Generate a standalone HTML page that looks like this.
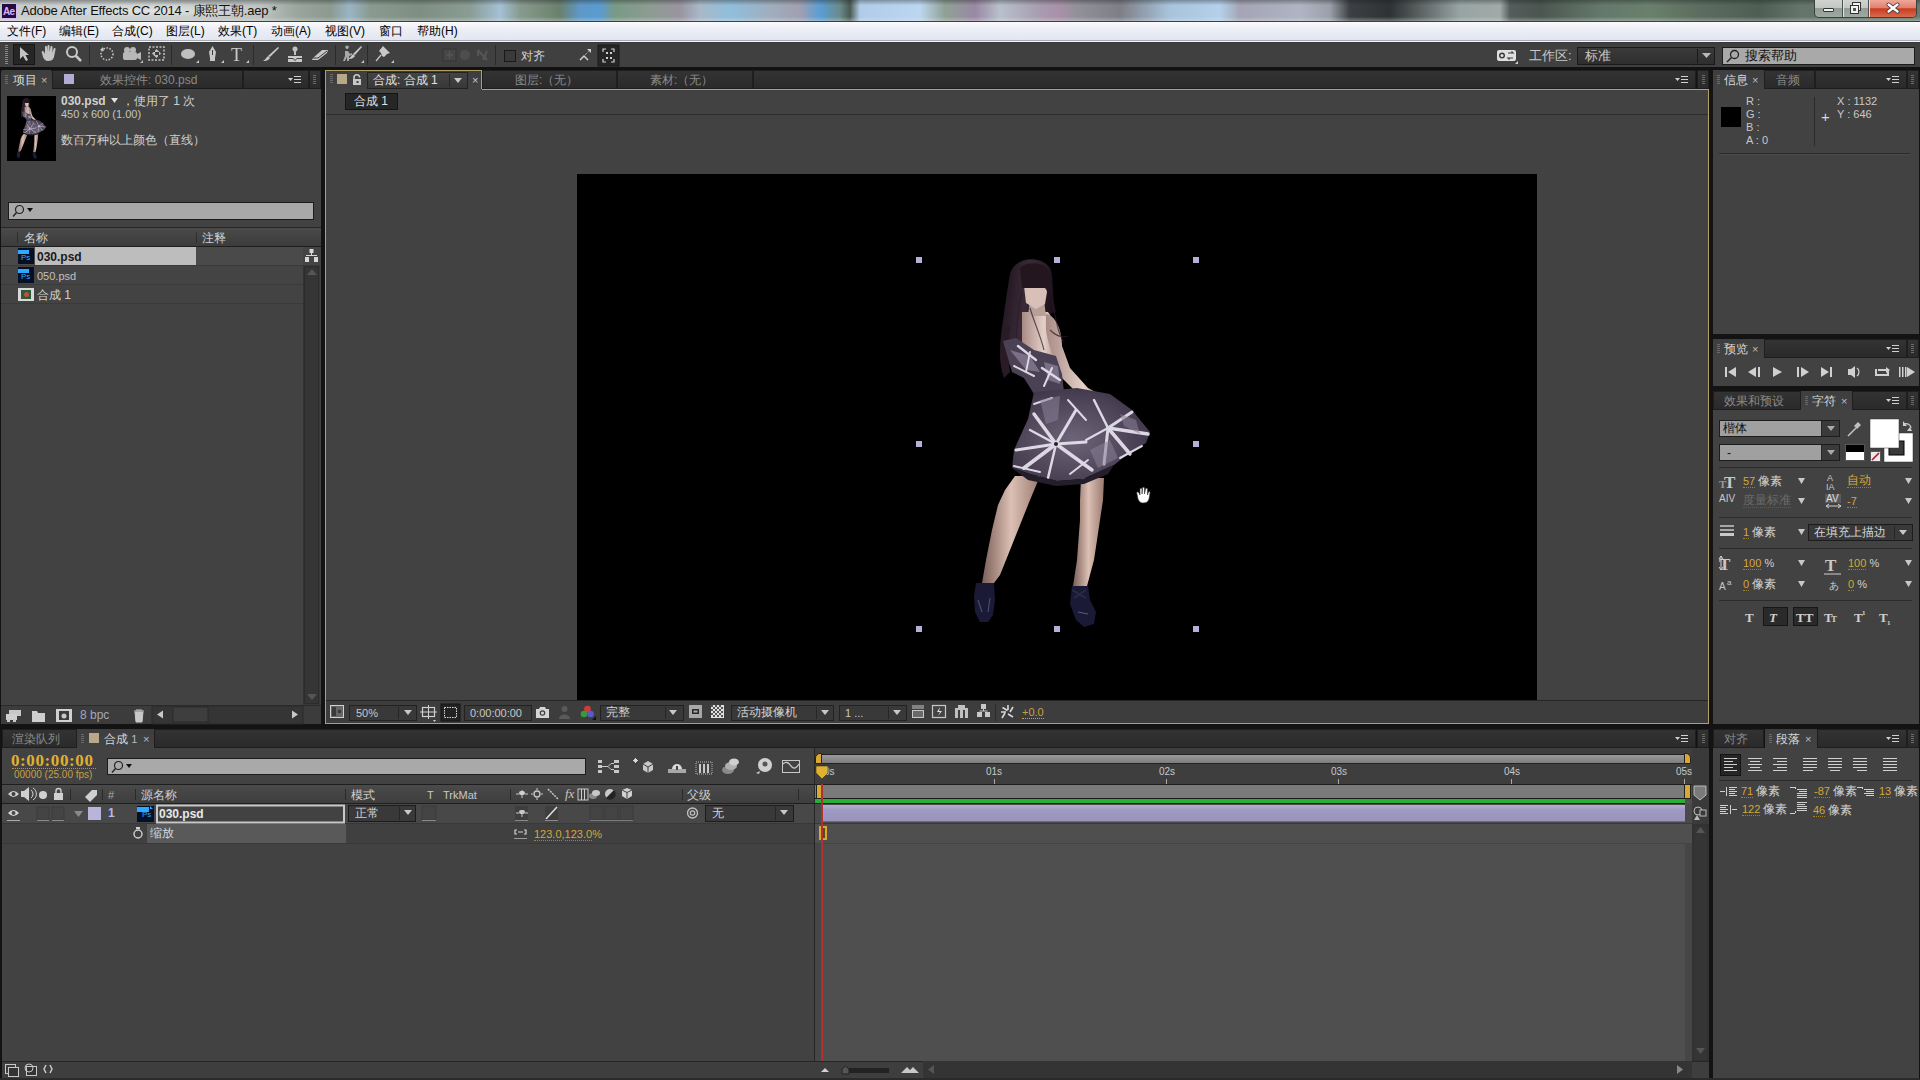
<!DOCTYPE html>
<html><head><meta charset="utf-8">
<style>
*{box-sizing:border-box;margin:0;padding:0}
html,body{width:1920px;height:1080px;overflow:hidden;background:#131313;font-family:"Liberation Sans",sans-serif;font-size:12px;color:#c8c8c8}
.a{position:absolute}
.t{position:absolute;white-space:nowrap;line-height:14px}
svg{position:absolute;overflow:visible}
</style></head><body>
<!-- TITLE BAR -->
<div class="a" style="left:0;top:0;width:1920px;height:21px;background:linear-gradient(90deg,#c8cccb 0px,#c6cac9 120px,#bcc2c0 260px,#98a49c 300px,#8c9a90 330px,#9ab4c4 350px,#8a9a90 370px,#7e8e82 420px,#8a9c94 470px,#a4c0d4 500px,#889a8e 520px,#6a806c 560px,#5e98c8 580px,#5a9cd0 600px,#7a9a84 615px,#8c9c92 650px,#9a94a0 680px,#a8b8c8 700px,#90bedc 730px,#a0aebe 770px,#a0a0b0 800px,#5a9ed4 820px,#6a8a8a 840px,#4a5a52 850px,#b0cce8 860px,#bcd6f0 920px,#90a094 945px,#9a88a4 975px,#b8c0cc 1000px,#a89cb0 1040px,#a890a8 1060px,#909098 1080px,#7e7e86 1120px,#a8c4dc 1170px,#b4d0ea 1220px,#a4a4b4 1240px,#b0b4c4 1300px,#9aa0a8 1330px,#3c4044 1350px,#2e3234 1390px,#5a6262 1420px,#98a4a4 1460px,#a0aaa8 1500px,#545c5c 1510px,#4a5650 1540px,#64786a 1600px,#6a806c 1650px,#5c6c5e 1700px,#4e5e54 1760px,#64746a 1800px,#6a7a70 1920px)"></div>

<div class="a" style="left:0;top:0;width:1920px;height:21px;background:linear-gradient(rgba(20,25,25,.35),rgba(255,255,255,0) 25%,rgba(255,255,255,0) 80%,rgba(230,235,235,.35))"></div>
<!-- AE icon -->
<div class="a" style="left:1px;top:3px;width:16px;height:16px;background:#d6b8f0;border-radius:1px"></div>
<div class="a" style="left:2px;top:4px;width:14px;height:14px;background:#230d3e"></div>
<div class="t" style="left:3px;top:5px;font-size:10px;color:#d9b3ff;font-weight:bold;letter-spacing:-0.8px">Ae</div>
<div class="a" style="left:18px;top:2px;width:270px;height:18px;background:radial-gradient(ellipse at center,rgba(235,240,240,.7) 0,rgba(235,240,240,0) 70%)"></div>
<div class="t" style="left:21px;top:3px;font-size:13px;color:#111;line-height:16px;letter-spacing:-0.2px">Adobe After Effects CC 2014 - 康熙王朝.aep *</div>
<!-- window buttons -->
<div class="a" style="left:1814px;top:0;width:103px;height:18px;border:1px solid #3a4040;border-top:none;border-radius:0 0 5px 5px;background:linear-gradient(#d0d4d0,#c4c8c4 45%,#949c96 50%,#a0a8a2)"></div>
<div class="a" style="left:1869px;top:0;width:47px;height:17px;border-radius:0 0 4px 0;background:linear-gradient(#f0a898,#e08070 45%,#c83c20 52%,#d86a50)"></div>
<div class="a" style="left:1842px;top:0;width:1px;height:17px;background:#4a5050;box-shadow:1px 0 0 #e0e4e0"></div>
<div class="a" style="left:1868px;top:0;width:1px;height:17px;background:#4a5050;box-shadow:1px 0 0 #e8e0e0"></div>
<div class="a" style="left:1823px;top:8px;width:11px;height:4px;background:#f0f0f0;border:1px solid #333;border-radius:1px"></div>
<div class="a" style="left:1852px;top:2px;width:9px;height:9px;background:#f0f0f0;border:1px solid #333"></div>
<div class="a" style="left:1850px;top:5px;width:9px;height:9px;background:#f0f0f0;border:1px solid #333"></div>
<div class="a" style="left:1853px;top:8px;width:3px;height:3px;background:#555"></div>
<svg style="left:1887px;top:3px" width="12" height="10"><path d="M1.5 1.5 L10.5 8.5 M10.5 1.5 L1.5 8.5" stroke="#333" stroke-width="4" stroke-linecap="round"/><path d="M1.5 1.5 L10.5 8.5 M10.5 1.5 L1.5 8.5" stroke="#fff" stroke-width="2.4" stroke-linecap="round"/></svg>
<!-- MENU BAR -->
<div class="a" style="left:0;top:21px;width:1920px;height:1px;background:#3c4040"></div>
<div class="a" style="left:0;top:22px;width:1920px;height:19px;background:linear-gradient(#fbfbfd,#eceef6 40%,#e2e6f0)"></div>
<div class="a" style="left:0;top:40px;width:1920px;height:1px;background:#a8acb4"></div>
<div class="a" style="left:0;top:41px;width:1920px;height:1px;background:#f4f6fa"></div>
<div class="t" style="left:7px;top:24px;color:#000">文件(F)</div>
<div class="t" style="left:59px;top:24px;color:#000">编辑(E)</div>
<div class="t" style="left:112px;top:24px;color:#000">合成(C)</div>
<div class="t" style="left:166px;top:24px;color:#000">图层(L)</div>
<div class="t" style="left:218px;top:24px;color:#000">效果(T)</div>
<div class="t" style="left:271px;top:24px;color:#000">动画(A)</div>
<div class="t" style="left:325px;top:24px;color:#000">视图(V)</div>
<div class="t" style="left:379px;top:24px;color:#000">窗口</div>
<div class="t" style="left:417px;top:24px;color:#000">帮助(H)</div>
<!-- TOOLBAR -->
<div class="a" style="left:0;top:42px;width:1920px;height:25px;background:linear-gradient(#383838,#404040 2px,#404040)"></div>
<div class="a" style="left:0;top:67px;width:1920px;height:3px;background:#121212"></div>

<!-- toolbar icons -->
<div class="a" style="left:5px;top:45px;width:3px;height:20px;background:repeating-linear-gradient(#8a8a8a 0 1px,#3c3c3c 1px 2px)"></div>
<div class="a" style="left:13px;top:44px;width:22px;height:21px;background:#262626;border:1px solid #161616"></div>
<svg style="left:0;top:0" width="1920" height="70">
 <g fill="#c4c4c4" stroke="none">
  <path d="M20 47 L20 59 L23 56 L26 61 L28 60 L25.5 55 L29 55 Z"/>
  <path d="M42 53 C41 51 43 50 44 52 L45 54 L45 47 C45 45.5 47 45.5 47 47 L47 52 L47.5 46 C47.5 44.5 49.5 44.5 49.5 46 L49.5 52 L50.5 47 C50.5 45.5 52.5 45.5 52.5 47 L52.5 53 L53.5 49 C54 47.5 56 48 55.5 49.5 L54 57 C53 60 51 61 48 61 C45 61 44 59 43 57 Z"/>
  <circle cx="72" cy="52" r="5" fill="none" stroke="#c8c8c8" stroke-width="2"/>
  <path d="M75.5 55.5 L81 61" stroke="#c8c8c8" stroke-width="2.5"/>
 </g>
 <rect x="89" y="45" width="1" height="20" fill="#2a2a2a"/>
 <circle cx="107" cy="54" r="6" fill="none" stroke="#c8c8c8" stroke-width="1.5" stroke-dasharray="1.5 1.5"/>
 <path d="M100 50 l3 -3 l1 4 z" fill="#c8c8c8"/>
 <g fill="#b8b8b8">
  <circle cx="127" cy="50" r="3"/><circle cx="133" cy="50" r="3"/>
  <rect x="123" y="52" width="14" height="8" rx="2"/>
  <path d="M137 54 L141 52 L141 60 L137 58 Z"/>
  <path d="M140 63 l3 -3 v3 z"/>
 </g>
 <g fill="none" stroke="#c0c0c0" stroke-width="1.5" stroke-dasharray="2 1.5"><rect x="149" y="47" width="15" height="13"/></g>
 <path d="M152 53.5 l3 -3 v6 z M161 53.5 l-3 -3 v6 z M156.5 49 l-3 3 h6z M156.5 58 l-3 -3 h6z" fill="#c0c0c0"/>
 <rect x="156" y="52" width="3" height="3" fill="#3c3c3c"/>
 <rect x="171" y="45" width="1" height="20" fill="#2a2a2a"/>
 <ellipse cx="188" cy="54" rx="7" ry="5" fill="#c0c0c0"/>
 <path d="M196 63 l3 -3 v3 z" fill="#c8c8c8"/>
 <path d="M212.5 46 L216 52 L215 58 L210 58 L209 52 Z" fill="#c8c8c8"/><rect x="210" y="58" width="5" height="3" fill="#c8c8c8"/>
 <path d="M212.5 50 v5" stroke="#3c3c3c" stroke-width="1"/>
 <path d="M221 63 l3 -3 v3 z" fill="#c8c8c8"/>
 <text x="231" y="61" font-family="Liberation Serif" font-size="18" fill="#c8c8c8">T</text>
 <path d="M246 63 l3 -3 v3 z" fill="#c8c8c8"/>
 <rect x="253" y="45" width="1" height="20" fill="#2a2a2a"/>
 <path d="M278 47 L279 48 L270 57 L268 56 Z" fill="#c8c8c8"/><path d="M268 56 L270 58 C268 61 265 61 263 61 C265 60 266 58 268 56 Z" fill="#c8c8c8"/>
 <circle cx="295" cy="49" r="2.5" fill="#c0c0c0"/><rect x="294" y="51" width="2" height="4" fill="#c0c0c0"/>
 <path d="M288 56 h14 v2 h-5 l-2 2 l-2 -2 h-5 z M288 59 h5 l2 2 l2 -2 h5 v3 h-14 z" fill="#c8c8c8"/>
 <path d="M313 58 L322 50 L328 50 L327 53 L318 60 L312 60 Z" fill="#c8c8c8"/><path d="M313 58 L318 58 L327 51" stroke="#3c3c3c" fill="none"/>
 <rect x="335" y="45" width="1" height="20" fill="#2a2a2a"/>
 <path d="M347 49 a1.8 1.8 0 1 1 0.1 0z M345 51 h3 l2 3 l2 -1 v2 l-3 1 v5 h-2 v-4 l-2 4 h-2 l2 -5z" fill="#a8a8a8"/>
 <path d="M361 46 L362 47 L355 55 L353 54 Z M353 54 L355 56 C353 59 350 59 348 59 C350 58 351 56 353 54Z" fill="#c8c8c8"/>
 <path d="M361 63 l3 -3 v3 z" fill="#c8c8c8"/>
 <rect x="367" y="45" width="1" height="20" fill="#2a2a2a"/>
 <path d="M383 46 L390 53 L387 54 L384 57 L382 56 L381 53 L379 51 Z" fill="#c8c8c8"/><path d="M381 55 L376 61" stroke="#c8c8c8" stroke-width="1.2"/>
 <path d="M391 63 l3 -3 v3 z" fill="#c8c8c8"/>
 <rect x="443" y="49" width="13" height="12" fill="#464646" stroke="#353535"/>
 <path d="M449.5 51 v8 M446 55 h7" stroke="#585858" stroke-width="1.2"/>
 <circle cx="465" cy="55" r="5" fill="#4e4e4e"/>
 <path d="M478 50 l9 10 M478 50 v6 M487 51 l-4 9" stroke="#555" stroke-width="2" fill="none"/>
 <rect x="495" y="45" width="1" height="20" fill="#2a2a2a"/>
 <rect x="504.5" y="50.5" width="11" height="11" fill="#3a3a3a" stroke="#1a1a1a"/>
 <path d="M580 60 L584 56 L588 60" stroke="#d0d0d0" stroke-width="1.5" fill="none"/>
 <path d="M585 55 L590 50" stroke="#d0d0d0" stroke-width="1" stroke-dasharray="1 1"/><path d="M587 49 h4 v4z" fill="#d0d0d0"/>
 <rect x="598" y="45" width="21" height="21" fill="#262626" stroke="#181818"/>
 <path d="M603 52 v-3 h3 M611 49 h3 v3 M614 59 v3 h-3 M606 62 h-3 v-3" stroke="#d0d0d0" stroke-width="1.2" fill="none"/>
 <rect x="606" y="52" width="2" height="2" fill="#d0d0d0"/><rect x="610" y="52" width="2" height="2" fill="#d0d0d0"/><rect x="606" y="57" width="2" height="2" fill="#d0d0d0"/><rect x="610" y="57" width="2" height="2" fill="#d0d0d0"/>
 <!-- workspace icon -->
 <rect x="1497" y="50" width="19" height="11" rx="2" fill="#e0e0e0"/>
 <circle cx="1502" cy="55.5" r="3" fill="#3c3c3c"/><circle cx="1502" cy="55.5" r="1.5" fill="#e0e0e0"/>
 <path d="M1508 53 h5 l-1.5 -1.5 M1513 58 h-5 l1.5 1.5" stroke="#3c3c3c" stroke-width="1.2" fill="none"/>
 <path d="M1515 64 l3 -3 v3 z" fill="#d0d0d0"/>
</svg>
<div class="t" style="left:521px;top:49px;color:#d4d4d4">对齐</div>
<div class="t" style="left:1529px;top:49px;color:#c8c8c8;font-size:13px">工作区:</div>
<div class="a" style="left:1577px;top:47px;width:138px;height:18px;background:linear-gradient(#3a3a3a,#2e2e2e);border:1px solid #1a1a1a"></div>
<div class="a" style="left:1697px;top:49px;width:1px;height:14px;background:#1a1a1a"></div>
<svg style="left:1702px;top:53px" width="10" height="6"><path d="M0 0 h9 l-4.5 5z" fill="#b8b8b8"/></svg>
<div class="t" style="left:1585px;top:49px;color:#c8c8c8;font-size:13px">标准</div>
<div class="a" style="left:1722px;top:47px;width:193px;height:18px;background:#a9a9a9;border:1px solid #1c1c1c"></div>
<svg style="left:1726px;top:49px" width="14" height="14"><circle cx="8.5" cy="5.5" r="4" fill="none" stroke="#222" stroke-width="1.3"/><path d="M5.5 8.5 L1 13" stroke="#222" stroke-width="1.5"/></svg>
<div class="t" style="left:1745px;top:49px;color:#111;font-size:13px">搜索帮助</div>

<!-- ============ PROJECT PANEL ============ -->
<div class="a" style="left:1px;top:70px;width:320px;height:654px;background:#424242"></div>
<!-- tab row -->
<div class="a" style="left:1px;top:70px;width:320px;height:19px;background:#131313"></div>
<div class="a" style="left:1px;top:70px;width:51px;height:19px;background:linear-gradient(#3e3e3e,#424242);border-radius:2px 2px 0 0"></div>
<div class="a" style="left:52px;top:70px;width:191px;height:19px;background:linear-gradient(#333,#2a2a2a);border:1px solid #1e1e1e;border-bottom:1px solid #1a1a1a"></div>
<div class="a" style="left:243px;top:70px;width:66px;height:19px;background:linear-gradient(#333,#2a2a2a);border:1px solid #1e1e1e;border-bottom:1px solid #1a1a1a"></div>
<div class="a" style="left:309px;top:70px;width:12px;height:19px;background:linear-gradient(#333,#2a2a2a);border:1px solid #1e1e1e"></div>
<div class="a" style="left:5px;top:75px;width:3px;height:10px;background:repeating-linear-gradient(#6a6a6a 0 1px,transparent 1px 2px)"></div>
<div class="a" style="left:313px;top:75px;width:3px;height:10px;background:repeating-linear-gradient(#6a6a6a 0 1px,transparent 1px 2px)"></div>
<div class="t" style="left:13px;top:73px;color:#d8d8d8">项目</div>
<div class="t" style="left:41px;top:73px;color:#bbb;font-size:11px">×</div>
<div class="a" style="left:64px;top:74px;width:10px;height:10px;background:#b3acd4"></div>
<div class="t" style="left:100px;top:73px;color:#8a8a8a">效果控件: 030.psd</div>
<svg style="left:288px;top:75px" width="16" height="10"><path d="M0 3 h5 l-2.5 3z" fill="#d0d0d0"/><path d="M6 1.5 h7 M6 4.5 h7 M6 7.5 h7" stroke="#d0d0d0" stroke-width="1.2"/></svg>
<!-- info -->
<div class="a" style="left:7px;top:96px;width:49px;height:65px;background:#000"></div>
<svg style="left:7px;top:96px;overflow:hidden" width="49" height="65"><g transform="translate(19.3 2) scale(0.165) translate(-1032 -258)">
 <!-- legs -->
 <path d="M1015 476 L1040 476 L1030 500 L1022 520 L1010 550 L1000 575 L994 583 L982 583 L986 560 L992 530 L998 505 L1005 490 Z" fill="url(#leg)"/>
 <path d="M1081 478 L1104 478 L1103 500 L1100 520 L1094 560 L1087 586 L1073 586 L1077 560 L1080 520 L1080 500 Z" fill="url(#leg)"/>
 <!-- shoes -->
 <path d="M976 583 L994 583 L995 600 L993 615 L988 622 L980 622 L975 612 L974 596 Z" fill="#1a1a36"/>
 <path d="M978 600 l4 12 M990 598 l-2 14" stroke="#4a4a6a" stroke-width="1.2"/>
 <path d="M1072 586 L1088 586 L1090 600 L1096 612 L1094 624 L1084 627 L1076 620 L1070 604 Z" fill="#1a1a36"/>
 <path d="M1072 590 l14 8 M1086 590 l-12 8" stroke="#2a2a4a" stroke-width="2"/>
 <path d="M1078 612 l10 2" stroke="#5a5a7a" stroke-width="1.2"/>
 <!-- hair back -->
 <path d="M1010 274 C1014 256 1044 254 1051 270 C1054 285 1052 300 1056 312 L1040 318 L1024 340 L1012 360 L1004 376 C998 360 1000 340 1003 320 C1006 300 1008 285 1010 274 Z" fill="url(#hair)"/>
 <path d="M1004 330 C1000 345 998 360 1004 378 L1010 372 C1008 355 1008 340 1010 325Z" fill="#2a1a26"/>
 <!-- back / shoulders -->
 <path d="M1022 312 L1048 312 L1058 326 L1062 345 L1058 362 L1036 362 L1022 345 Z" fill="url(#skin)"/>
 <!-- arm -->
 <path d="M1046 314 C1056 316 1062 330 1062 346 L1070 368 L1088 388 L1110 400 L1114 410 L1104 412 L1082 398 L1062 378 C1054 362 1048 344 1046 330 Z" fill="url(#skin)"/>
 <path d="M1106 400 l8 2 l2 8 l-8 2z" fill="#e8e0e8"/>
 <!-- face -->
 <path d="M1030 300 L1044 300 L1046 316 L1028 316 Z" fill="#b8a098"/><path d="M1024 286 C1030 282 1046 284 1047 292 L1045 304 L1036 309 L1026 303 Z" fill="#d8c0b8"/>
 <path d="M1020 268 C1028 260 1048 262 1050 276 L1048 288 L1022 288 Z" fill="#24161f"/>
 
 <!-- hair strands over back -->
 <path d="M1022 292 C1018 310 1016 330 1016 350 M1030 308 C1034 322 1040 334 1044 350 M1052 300 C1056 320 1058 334 1064 342 M1050 330 C1056 336 1062 338 1068 336" stroke="#2a1c26" stroke-width="1.2" fill="none" opacity=".7"/>
 <!-- dress bodice -->
 <path d="M1003 341 L1016 338 L1034 350 L1056 356 L1062 374 L1064 392 L1040 396 L1034 394 L1024 378 L1012 372 Z" fill="#4a4254"/><path d="M1010 350 L1030 356 L1040 372 L1026 370Z M1044 362 L1058 366 L1060 384 L1048 380Z" fill="#9a90a8" opacity=".6"/>
 <!-- skirt -->
 <path d="M1034 392 L1077 388 L1110 394 L1132 410 L1150 432 L1146 443 L1128 454 L1114 465 L1083 479 L1057 481 L1030 474 L1012 468 L1014 450 L1028 419 Z" fill="url(#skirt)"/>
 <g stroke="#e8e4f0" stroke-linecap="round" fill="none" opacity=".92">
  <path d="M1056 444 L1024 468" stroke-width="4"/>
  <path d="M1056 444 L1034 414" stroke-width="3.5"/>
  <path d="M1056 444 L1092 470" stroke-width="3.5"/>
  <path d="M1056 444 L1016 450" stroke-width="3"/>
  <path d="M1056 444 L1076 410" stroke-width="3"/>
  <path d="M1056 444 L1086 442" stroke-width="3"/>
  <path d="M1056 444 L1048 478" stroke-width="2.5"/>
  <path d="M1056 444 L1030 430" stroke-width="2.5"/>
  <path d="M1108 428 L1148 434" stroke-width="3.5"/>
  <path d="M1108 428 L1130 454" stroke-width="3.5"/>
  <path d="M1108 428 L1094 400" stroke-width="2.5"/>
  <path d="M1108 428 L1104 464" stroke-width="3"/>
  <path d="M1108 428 L1132 412" stroke-width="3"/>
  <path d="M1108 428 L1086 440" stroke-width="2"/>
  <path d="M1086 420 L1068 400" stroke-width="2"/>
  <path d="M1036 360 L1018 346" stroke-width="2.5"/>
  <path d="M1042 368 L1060 380" stroke-width="2.5"/>
  <path d="M1034 376 L1014 366" stroke-width="2"/>
  <path d="M1044 386 L1052 368" stroke-width="2"/>
  <path d="M1030 352 L1026 372" stroke-width="1.8"/>
  <path d="M1014 466 L1040 472" stroke-width="2"/>
  <path d="M1120 458 L1142 446" stroke-width="2"/>
  <path d="M1070 474 L1088 460" stroke-width="2"/>
  <path d="M1034 404 L1052 398" stroke-width="2"/>
 </g>
 <g fill="#8a8098" opacity=".55">
  <path d="M1040 400 L1060 396 L1058 420 L1046 424Z"/>
  <path d="M1090 450 L1110 440 L1118 458 L1098 468Z"/>
  <path d="M1120 414 L1136 420 L1140 434 L1124 426Z"/>
 </g>
 <path d="M1012 468 L1030 474 L1057 481 L1083 479 L1114 465 L1108 474 L1084 484 L1056 486 L1028 480Z" fill="#241e2a"/>
 <circle cx="1056" cy="444" r="2" fill="#222"/>
 </g></svg>
<div class="t" style="left:61px;top:94px;color:#d0d0d0;font-weight:bold;font-size:12px">030.psd</div>
<svg style="left:111px;top:98px" width="8" height="6"><path d="M0 0 h7 l-3.5 5z" fill="#e0e0e0"/></svg>
<div class="t" style="left:122px;top:94px;color:#d0d0d0">，使用了 1 次</div>
<div class="t" style="left:61px;top:107px;color:#c4c4c4;font-size:11px">450 x 600 (1.00)</div>
<div class="t" style="left:61px;top:133px;color:#d0d0d0">数百万种以上颜色（直线）</div>
<!-- search -->
<div class="a" style="left:8px;top:202px;width:306px;height:18px;background:#a9a9a9;border:1px solid #1c1c1c"></div>
<svg style="left:12px;top:204px" width="24" height="14"><circle cx="7.5" cy="5.5" r="4" fill="none" stroke="#222" stroke-width="1.2"/><path d="M4.5 8.5 L1 12.5" stroke="#222" stroke-width="1.4"/><path d="M15 4 h6 l-3 4z" fill="#111"/></svg>
<div class="a" style="left:1px;top:227px;width:320px;height:1px;background:#262626"></div>
<div class="a" style="left:1px;top:228px;width:320px;height:18px;background:linear-gradient(#4a4a4a,#3c3c3c)"></div>
<div class="a" style="left:17px;top:232px;width:1px;height:11px;background:#2e2e2e"></div>
<div class="a" style="left:196px;top:232px;width:1px;height:11px;background:#2e2e2e"></div>
<div class="t" style="left:24px;top:231px;color:#cfcfcf">名称</div>
<div class="t" style="left:202px;top:231px;color:#cfcfcf">注释</div>
<div class="a" style="left:1px;top:246px;width:320px;height:1px;background:#1e1e1e"></div>
<div class="a" style="left:1px;top:247px;width:302px;height:18px;background:#4a4a4a"></div>
<div class="a" style="left:35px;top:247px;width:161px;height:18px;background:#bdbdbd"></div>
<div class="a" style="left:1px;top:265px;width:302px;height:1px;background:#3a3a3a"></div>
<div class="a" style="left:1px;top:266px;width:302px;height:18px;background:#444"></div>
<div class="a" style="left:1px;top:284px;width:302px;height:1px;background:#3a3a3a"></div>
<div class="a" style="left:1px;top:285px;width:302px;height:18px;background:#434343"></div>
<div class="a" style="left:1px;top:303px;width:302px;height:1px;background:#3a3a3a"></div>
<!-- ps icons -->
<div class="a" style="left:18px;top:248px;width:16px;height:16px;background:#061024"></div>
<div class="a" style="left:18px;top:250px;width:11px;height:4px;background:#31a8ff"></div>
<div class="t" style="left:21px;top:253px;color:#31a8ff;font-size:8px;line-height:10px">Ps</div>
<div class="a" style="left:18px;top:267px;width:16px;height:16px;background:#061024"></div>
<div class="a" style="left:18px;top:269px;width:11px;height:4px;background:#31a8ff"></div>
<div class="t" style="left:21px;top:272px;color:#31a8ff;font-size:8px;line-height:10px">Ps</div>
<div class="a" style="left:18px;top:288px;width:16px;height:13px;background:#d8d8d8"></div>
<div class="a" style="left:21px;top:290px;width:10px;height:9px;background:#2a5a3a"></div>
<div class="a" style="left:24px;top:292px;width:5px;height:5px;background:#c84a3a;border-radius:50%"></div>
<div class="t" style="left:37px;top:250px;color:#1a1a1a;font-weight:bold;font-size:12px">030.psd</div>
<div class="t" style="left:37px;top:269px;color:#c0c0c0;font-size:11px">050.psd</div>
<div class="t" style="left:37px;top:288px;color:#d0d0d0">合成 1</div>
<!-- vscroll -->
<div class="a" style="left:303px;top:247px;width:17px;height:459px;background:#3a3a3a;border-left:1px solid #333"></div>
<div class="a" style="left:303px;top:247px;width:17px;height:18px;background:#444"></div>
<svg style="left:304px;top:249px" width="16" height="14"><rect x="5.5" y="0" width="4" height="4" fill="#d8d8d8"/><rect x="7" y="4" width="1" height="3" fill="#d8d8d8"/><rect x="2" y="6" width="11" height="1" fill="#d8d8d8"/><rect x="1" y="8" width="4" height="5" fill="#d8d8d8"/><rect x="10" y="8" width="4" height="5" fill="#d8d8d8"/></svg>
<div class="a" style="left:304px;top:266px;width:15px;height:438px;background:#353535;border:1px solid #2c2c2c"></div>
<svg style="left:306px;top:268px" width="12" height="8"><path d="M1 7 L6 1 L11 7 Z" fill="#555"/></svg>
<svg style="left:306px;top:693px" width="12" height="8"><path d="M1 1 L6 7 L11 1 Z" fill="#555"/></svg>
<!-- bottom bar -->
<div class="a" style="left:1px;top:705px;width:320px;height:1px;background:#2a2a2a"></div>
<div class="a" style="left:1px;top:706px;width:320px;height:18px;background:#3c3c3c"></div>
<svg style="left:0;top:706px" width="320" height="18">
 <rect x="9" y="4" width="12" height="6" fill="#c8c8c8"/><rect x="6" y="8" width="11" height="6" fill="#d0d0d0"/><rect x="7" y="13" width="3" height="3" fill="#c8c8c8"/><rect x="13" y="13" width="3" height="3" fill="#c8c8c8"/>
 <path d="M32 5 h5 l1 2 h7 v9 h-13z" fill="#cfcfcf"/>
 <rect x="56" y="3" width="16" height="13" fill="#d0d0d0"/><rect x="59" y="5" width="10" height="9" fill="#3a3a3a"/><circle cx="64" cy="10" r="2.5" fill="#c8c8c8"/>
 <path d="M134 5 h10 M136 4 h6 M135 6 l1 10 h6 l1 -10z" stroke="#c8c8c8" fill="#c8c8c8" stroke-width="1"/>
 <rect x="152" y="0" width="151" height="18" fill="#353535" stroke="#2a2a2a"/>
 <path d="M157 8.5 l6 -4 v8z" fill="#c8c8c8"/>
 <rect x="173" y="1" width="35" height="15" fill="#3e3e3e" stroke="#2a2a2a"/>
 <path d="M298 8.5 l-6 -4 v8z" fill="#c8c8c8"/>
</svg>
<div class="t" style="left:80px;top:708px;color:#a0a8bc;font-size:12px">8 bpc</div>

<!-- ============ COMP PANEL ============ -->
<div class="a" style="left:325px;top:70px;width:1384px;height:19px;background:#131313"></div>
<div class="a" style="left:325px;top:70px;width:157px;height:20px;background:linear-gradient(#3e3e3e,#424242);border:1px solid #b4a064;border-bottom:none"></div>
<div class="a" style="left:482px;top:70px;width:135px;height:19px;background:linear-gradient(#333,#2a2a2a);border:1px solid #1e1e1e"></div>
<div class="a" style="left:617px;top:70px;width:136px;height:19px;background:linear-gradient(#333,#2a2a2a);border:1px solid #1e1e1e"></div>
<div class="a" style="left:753px;top:70px;width:943px;height:19px;background:linear-gradient(#333,#2a2a2a);border:1px solid #1e1e1e"></div>
<div class="a" style="left:1697px;top:70px;width:12px;height:19px;background:linear-gradient(#333,#2a2a2a);border:1px solid #1e1e1e"></div>
<div class="a" style="left:1702px;top:75px;width:3px;height:10px;background:repeating-linear-gradient(#6a6a6a 0 1px,transparent 1px 2px)"></div>
<div class="t" style="left:515px;top:73px;color:#8a8a8a">图层:（无）</div>
<div class="t" style="left:650px;top:73px;color:#8a8a8a">素材:（无）</div>
<svg style="left:1675px;top:75px" width="16" height="10"><path d="M0 3 h5 l-2.5 3z" fill="#d0d0d0"/><path d="M6 1.5 h7 M6 4.5 h7 M6 7.5 h7" stroke="#d0d0d0" stroke-width="1.2"/></svg>
<!-- body -->
<div class="a" style="left:325px;top:89px;width:1384px;height:635px;background:#424242;border:1px solid #b4a064;border-top:none"></div>
<div class="a" style="left:482px;top:89px;width:1227px;height:1px;background:#b4a064"></div>
<div class="a" style="left:330px;top:74px;width:3px;height:10px;background:repeating-linear-gradient(#6a6a6a 0 1px,transparent 1px 2px)"></div>
<div class="a" style="left:337px;top:74px;width:10px;height:10px;background:#b8a888"></div>
<svg style="left:352px;top:74px" width="11" height="12"><path d="M2 5 V3.5 A2.8 2.8 0 0 1 7.6 3.5" stroke="#c8c8c8" stroke-width="1.6" fill="none"/><rect x="1" y="5" width="8" height="6" fill="#c8c8c8"/><rect x="4.5" y="7" width="2" height="2" fill="#3e3e3e"/></svg>
<div class="a" style="left:367px;top:72px;width:101px;height:17px;background:linear-gradient(#444,#383838);border:1px solid #222"></div>
<div class="a" style="left:449px;top:74px;width:1px;height:13px;background:#262626"></div>
<svg style="left:454px;top:78px" width="10" height="6"><path d="M0 0 h8 l-4 5z" fill="#c8c8c8"/></svg>
<div class="t" style="left:373px;top:73px;color:#e0e0e0">合成: 合成 1</div>
<div class="t" style="left:472px;top:73px;color:#c8c8c8;font-size:11px">×</div>
<div class="a" style="left:345px;top:93px;width:53px;height:17px;background:#262626;border:1px solid #141414"></div>
<div class="t" style="left:354px;top:94px;color:#e0e0e0">合成 1</div>
<div class="a" style="left:326px;top:114px;width:1382px;height:1px;background:#2c2c2c"></div>
<!-- viewer -->
<div class="a" style="left:577px;top:174px;width:960px;height:526px;background:#000"></div>

<!-- ============ GIRL ============ -->
<svg style="left:0;top:0" width="1920" height="1080">
 <defs>
  <linearGradient id="leg" x1="0" x2="1"><stop offset="0" stop-color="#7a5e58"/><stop offset=".5" stop-color="#dcc0b4"/><stop offset="1" stop-color="#9a7a70"/></linearGradient>
  <linearGradient id="skin" x1="0" x2="1"><stop offset="0" stop-color="#a88a84"/><stop offset=".55" stop-color="#e4d0c8"/><stop offset="1" stop-color="#9a7a74"/></linearGradient>
  <linearGradient id="hair" x1="0" x2="1" y1="0" y2="0.3"><stop offset="0" stop-color="#1a1018"/><stop offset=".5" stop-color="#3a2a38"/><stop offset="1" stop-color="#1a1018"/></linearGradient><radialGradient id="skirt" cx=".45" cy=".55" r=".65"><stop offset="0" stop-color="#6e6478"/><stop offset="1" stop-color="#3a3244"/></radialGradient>
 </defs>
 <!-- legs -->
 <path d="M1015 476 L1040 476 L1030 500 L1022 520 L1010 550 L1000 575 L994 583 L982 583 L986 560 L992 530 L998 505 L1005 490 Z" fill="url(#leg)"/>
 <path d="M1081 478 L1104 478 L1103 500 L1100 520 L1094 560 L1087 586 L1073 586 L1077 560 L1080 520 L1080 500 Z" fill="url(#leg)"/>
 <!-- shoes -->
 <path d="M976 583 L994 583 L995 600 L993 615 L988 622 L980 622 L975 612 L974 596 Z" fill="#1a1a36"/>
 <path d="M978 600 l4 12 M990 598 l-2 14" stroke="#4a4a6a" stroke-width="1.2"/>
 <path d="M1072 586 L1088 586 L1090 600 L1096 612 L1094 624 L1084 627 L1076 620 L1070 604 Z" fill="#1a1a36"/>
 <path d="M1072 590 l14 8 M1086 590 l-12 8" stroke="#2a2a4a" stroke-width="2"/>
 <path d="M1078 612 l10 2" stroke="#5a5a7a" stroke-width="1.2"/>
 <!-- hair back -->
 <path d="M1010 274 C1014 256 1044 254 1051 270 C1054 285 1052 300 1056 312 L1040 318 L1024 340 L1012 360 L1004 376 C998 360 1000 340 1003 320 C1006 300 1008 285 1010 274 Z" fill="url(#hair)"/>
 <path d="M1004 330 C1000 345 998 360 1004 378 L1010 372 C1008 355 1008 340 1010 325Z" fill="#2a1a26"/>
 <!-- back / shoulders -->
 <path d="M1022 312 L1048 312 L1058 326 L1062 345 L1058 362 L1036 362 L1022 345 Z" fill="url(#skin)"/>
 <!-- arm -->
 <path d="M1046 314 C1056 316 1062 330 1062 346 L1070 368 L1088 388 L1110 400 L1114 410 L1104 412 L1082 398 L1062 378 C1054 362 1048 344 1046 330 Z" fill="url(#skin)"/>
 <path d="M1106 400 l8 2 l2 8 l-8 2z" fill="#e8e0e8"/>
 <!-- face -->
 <path d="M1030 300 L1044 300 L1046 316 L1028 316 Z" fill="#b8a098"/><path d="M1024 286 C1030 282 1046 284 1047 292 L1045 304 L1036 309 L1026 303 Z" fill="#d8c0b8"/>
 <path d="M1020 268 C1028 260 1048 262 1050 276 L1048 288 L1022 288 Z" fill="#24161f"/>
 
 <!-- hair strands over back -->
 <path d="M1022 292 C1018 310 1016 330 1016 350 M1030 308 C1034 322 1040 334 1044 350 M1052 300 C1056 320 1058 334 1064 342 M1050 330 C1056 336 1062 338 1068 336" stroke="#2a1c26" stroke-width="1.2" fill="none" opacity=".7"/>
 <!-- dress bodice -->
 <path d="M1003 341 L1016 338 L1034 350 L1056 356 L1062 374 L1064 392 L1040 396 L1034 394 L1024 378 L1012 372 Z" fill="#4a4254"/><path d="M1010 350 L1030 356 L1040 372 L1026 370Z M1044 362 L1058 366 L1060 384 L1048 380Z" fill="#9a90a8" opacity=".6"/>
 <!-- skirt -->
 <path d="M1034 392 L1077 388 L1110 394 L1132 410 L1150 432 L1146 443 L1128 454 L1114 465 L1083 479 L1057 481 L1030 474 L1012 468 L1014 450 L1028 419 Z" fill="url(#skirt)"/>
 <g stroke="#e8e4f0" stroke-linecap="round" fill="none" opacity=".92">
  <path d="M1056 444 L1024 468" stroke-width="4"/>
  <path d="M1056 444 L1034 414" stroke-width="3.5"/>
  <path d="M1056 444 L1092 470" stroke-width="3.5"/>
  <path d="M1056 444 L1016 450" stroke-width="3"/>
  <path d="M1056 444 L1076 410" stroke-width="3"/>
  <path d="M1056 444 L1086 442" stroke-width="3"/>
  <path d="M1056 444 L1048 478" stroke-width="2.5"/>
  <path d="M1056 444 L1030 430" stroke-width="2.5"/>
  <path d="M1108 428 L1148 434" stroke-width="3.5"/>
  <path d="M1108 428 L1130 454" stroke-width="3.5"/>
  <path d="M1108 428 L1094 400" stroke-width="2.5"/>
  <path d="M1108 428 L1104 464" stroke-width="3"/>
  <path d="M1108 428 L1132 412" stroke-width="3"/>
  <path d="M1108 428 L1086 440" stroke-width="2"/>
  <path d="M1086 420 L1068 400" stroke-width="2"/>
  <path d="M1036 360 L1018 346" stroke-width="2.5"/>
  <path d="M1042 368 L1060 380" stroke-width="2.5"/>
  <path d="M1034 376 L1014 366" stroke-width="2"/>
  <path d="M1044 386 L1052 368" stroke-width="2"/>
  <path d="M1030 352 L1026 372" stroke-width="1.8"/>
  <path d="M1014 466 L1040 472" stroke-width="2"/>
  <path d="M1120 458 L1142 446" stroke-width="2"/>
  <path d="M1070 474 L1088 460" stroke-width="2"/>
  <path d="M1034 404 L1052 398" stroke-width="2"/>
 </g>
 <g fill="#8a8098" opacity=".55">
  <path d="M1040 400 L1060 396 L1058 420 L1046 424Z"/>
  <path d="M1090 450 L1110 440 L1118 458 L1098 468Z"/>
  <path d="M1120 414 L1136 420 L1140 434 L1124 426Z"/>
 </g>
 <path d="M1012 468 L1030 474 L1057 481 L1083 479 L1114 465 L1108 474 L1084 484 L1056 486 L1028 480Z" fill="#241e2a"/>
 <circle cx="1056" cy="444" r="2" fill="#222"/>
 <!-- handles -->
 <g fill="#b4b0d8">
  <rect x="916" y="257" width="6" height="6"/><rect x="1054" y="257" width="6" height="6"/><rect x="1193" y="257" width="6" height="6"/>
  <rect x="916" y="441" width="6" height="6"/><rect x="1193" y="441" width="6" height="6"/>
  <rect x="916" y="626" width="6" height="6"/><rect x="1054" y="626" width="6" height="6"/><rect x="1193" y="626" width="6" height="6"/>
 </g>
 <!-- hand cursor -->
 <path d="M1137 494 C1136 492 1138 491 1139 493 L1140 495 L1140 489 C1140 488 1142 488 1142 489 L1142 494 L1142.5 488 C1142.5 487 1144.5 487 1144.5 488 L1144.5 494 L1145.5 489 C1145.5 488 1147.5 488 1147.5 489 L1147.5 495 L1148.5 492 C1149 491 1150.5 491.5 1150 493 L1149 499 C1148 502 1146 503 1143 503 C1140 503 1139 501 1138 499 Z" fill="#fff" stroke="#333" stroke-width="0.6"/>
</svg>
<div class="a" style="left:326px;top:700px;width:1382px;height:1px;background:#262626"></div>
<div class="a" style="left:326px;top:701px;width:1382px;height:22px;background:#3d3d3d"></div>
<svg style="left:0;top:0" width="1920" height="1080">
 <rect x="330.5" y="705.5" width="13" height="12" fill="#666" stroke="#d0d0d0"/>
 <rect x="332" y="707" width="4" height="9" fill="#3a3a3a"/><rect x="338" y="710" width="3" height="3" fill="#3a3a3a"/>
 <rect x="349.5" y="705.5" width="67" height="15" fill="#393939" stroke="#222"/>
 <rect x="398" y="707" width="1" height="12" fill="#262626"/>
 <path d="M404 710 h8 l-4 5z" fill="#c8c8c8"/>
 <rect x="422.5" y="707.5" width="12" height="9" fill="none" stroke="#d0d0d0" stroke-width="1.2"/><path d="M428.5 705 v14 M420 712 h17" stroke="#d0d0d0" stroke-width="1"/><path d="M433 720 h3 l-1.5 2z" fill="#d0d0d0"/>
 <rect x="441" y="704" width="19" height="17" fill="#222" stroke="#141414"/>
 <rect x="444.5" y="707.5" width="12" height="10" fill="none" stroke="#d8d8d8" stroke-dasharray="1.5 1"/>
 <rect x="464.5" y="705.5" width="67" height="15" fill="#393939" stroke="#222"/>
 <path d="M536 709 h3 l1 -2 h5 l1 2 h3 v9 h-13z" fill="#d4d4d4"/><circle cx="542.5" cy="713" r="2.8" fill="#3d3d3d"/><circle cx="542.5" cy="713" r="1.6" fill="#d4d4d4"/>
 <circle cx="564.5" cy="709" r="3" fill="#5a5a5a"/><path d="M559 719 c0 -6 11 -6 11 0z" fill="#5a5a5a"/>
 <circle cx="587.5" cy="709" r="3.3" fill="#d43a3a"/><circle cx="584" cy="714" r="3.3" fill="#3a9a3a"/><circle cx="590.5" cy="714" r="3.3" fill="#5a5ad0"/>
 <path d="M592 720 h4 v-4z" fill="#111"/>
 <rect x="600.5" y="705.5" width="83" height="15" fill="#393939" stroke="#222"/>
 <rect x="665" y="707" width="1" height="12" fill="#262626"/>
 <path d="M669 710 h8 l-4 5z" fill="#c8c8c8"/>
 <rect x="689" y="705" width="13" height="13" fill="#a8a8a8"/><rect x="692" y="709" width="7" height="5" fill="#2a2a2a"/><rect x="693.5" y="710.5" width="4" height="2" fill="#a8a8a8"/>
 <rect x="711" y="705" width="13" height="13" fill="#e0e0e0"/>
 <path d="M711 705 h2v2h-2z M715 705 h2v2h-2z M719 705 h2v2h-2z M713 707 h2v2h-2z M717 707 h2v2h-2z M721 707 h2v2h-2z M711 709 h2v2h-2z M715 709 h2v2h-2z M719 709 h2v2h-2z M713 711 h2v2h-2z M717 711 h2v2h-2z M721 711 h2v2h-2z M711 713 h2v2h-2z M715 713 h2v2h-2z M719 713 h2v2h-2z M713 715 h2v2h-2z M717 715 h2v2h-2z M721 715 h2v2h-2z" fill="#555"/>
 <rect x="731.5" y="705.5" width="102" height="15" fill="#393939" stroke="#222"/>
 <rect x="816" y="707" width="1" height="12" fill="#262626"/>
 <path d="M821 710 h8 l-4 5z" fill="#c8c8c8"/>
 <rect x="839.5" y="705.5" width="67" height="15" fill="#393939" stroke="#222"/>
 <rect x="888" y="707" width="1" height="12" fill="#262626"/>
 <path d="M893 710 h8 l-4 5z" fill="#c8c8c8"/>
 <path d="M912 706 h12 M912 708 h12" stroke="#c8c8c8" stroke-width="1"/><rect x="912.5" y="710.5" width="11" height="7" fill="#6a6a6a" stroke="#c8c8c8"/>
 <rect x="932.5" y="705.5" width="13" height="12" fill="#444" stroke="#c8c8c8" stroke-width="1.2"/><path d="M940 707 l-3 5 h3 l-2 4 l4 -5 h-3z" fill="#e0e0e0"/>
 <rect x="955" y="708" width="13" height="10" fill="#c0c0c0"/><rect x="958" y="705" width="7" height="3" fill="#c0c0c0"/><rect x="958" y="710" width="2" height="8" fill="#3d3d3d"/><rect x="963" y="710" width="2" height="8" fill="#3d3d3d"/>
 <rect x="981" y="704" width="5" height="5" fill="#c8c8c8"/><rect x="977" y="712" width="5" height="5" fill="#c8c8c8"/><rect x="985" y="712" width="5" height="5" fill="#c8c8c8"/><path d="M983.5 709 v2 M979.5 711 h8" stroke="#c8c8c8"/>
 <rect x="995" y="704" width="1" height="17" fill="#2a2a2a"/>
 <path d="M1007.5 712.5 m-5 -5 l5 3 M1013 707 l-3 5 M1013 717 l-5 -3 M1002 718 l3 -5 M1001 712 h5 M1008 705 v5" stroke="#d8d8d8" stroke-width="1.6"/>
</svg>
<div class="t" style="left:356px;top:706px;color:#c8c8c8;font-size:11px">50%</div>
<div class="t" style="left:470px;top:706px;color:#c8c8c8;font-size:11px">0:00:00:00</div>
<div class="t" style="left:606px;top:705px;color:#d0d0d0">完整</div>
<div class="t" style="left:737px;top:705px;color:#d0d0d0">活动摄像机</div>
<div class="t" style="left:845px;top:706px;color:#c8c8c8;font-size:11px">1 ...</div>
<div class="t" style="left:1022px;top:706px;color:#c8a040;font-size:11px;border-bottom:1px dotted #c8a040;line-height:12px">+0.0</div>

<!-- ============ RIGHT PANELS ============ -->
<!-- info -->
<div class="a" style="left:1713px;top:70px;width:206px;height:264px;background:#424242"></div>
<div class="a" style="left:1713px;top:70px;width:206px;height:19px;background:#131313"></div>
<div class="a" style="left:1713px;top:70px;width:51px;height:19px;background:linear-gradient(#3e3e3e,#424242)"></div>
<div class="a" style="left:1764px;top:70px;width:51px;height:19px;background:linear-gradient(#333,#2a2a2a);border:1px solid #1e1e1e"></div>
<div class="a" style="left:1815px;top:70px;width:92px;height:19px;background:linear-gradient(#333,#2a2a2a);border:1px solid #1e1e1e"></div>
<div class="a" style="left:1907px;top:70px;width:12px;height:19px;background:linear-gradient(#333,#2a2a2a);border:1px solid #1e1e1e"></div>
<div class="a" style="left:1717px;top:75px;width:3px;height:10px;background:repeating-linear-gradient(#6a6a6a 0 1px,transparent 1px 2px)"></div>
<div class="a" style="left:1911px;top:75px;width:3px;height:10px;background:repeating-linear-gradient(#6a6a6a 0 1px,transparent 1px 2px)"></div>
<div class="t" style="left:1724px;top:73px;color:#d8d8d8">信息</div>
<div class="t" style="left:1752px;top:73px;color:#bbb;font-size:11px">×</div>
<div class="t" style="left:1776px;top:73px;color:#8a8a8a">音频</div>
<svg style="left:1886px;top:75px" width="16" height="10"><path d="M0 3 h5 l-2.5 3z" fill="#d0d0d0"/><path d="M6 1.5 h7 M6 4.5 h7 M6 7.5 h7" stroke="#d0d0d0" stroke-width="1.2"/></svg>
<div class="a" style="left:1721px;top:107px;width:20px;height:20px;background:#000"></div>
<div class="t" style="left:1746px;top:95px;color:#c8c8c8;font-size:11px;line-height:13px">R :<br>G :<br>B :<br>A : 0</div>
<div class="a" style="left:1814px;top:97px;width:1px;height:49px;background:#2a2a2a"></div>
<div class="t" style="left:1821px;top:110px;color:#d8d8d8;font-size:15px">+</div>
<div class="t" style="left:1837px;top:95px;color:#c8c8c8;font-size:11px;line-height:13px">X : 1132<br>Y : 646</div>
<div class="a" style="left:1719px;top:153px;width:191px;height:1px;background:#2a2a2a"></div>
<div class="a" style="left:1719px;top:154px;width:191px;height:1px;background:#4a4a4a"></div>
<!-- preview -->
<div class="a" style="left:1713px;top:339px;width:206px;height:47px;background:#424242"></div>
<div class="a" style="left:1713px;top:339px;width:206px;height:19px;background:#131313"></div>
<div class="a" style="left:1713px;top:339px;width:51px;height:19px;background:linear-gradient(#3e3e3e,#424242)"></div>
<div class="a" style="left:1764px;top:339px;width:143px;height:19px;background:linear-gradient(#333,#2a2a2a);border:1px solid #1e1e1e"></div>
<div class="a" style="left:1907px;top:339px;width:12px;height:19px;background:linear-gradient(#333,#2a2a2a);border:1px solid #1e1e1e"></div>
<div class="a" style="left:1717px;top:344px;width:3px;height:10px;background:repeating-linear-gradient(#6a6a6a 0 1px,transparent 1px 2px)"></div>
<div class="a" style="left:1911px;top:344px;width:3px;height:10px;background:repeating-linear-gradient(#6a6a6a 0 1px,transparent 1px 2px)"></div>
<div class="t" style="left:1724px;top:342px;color:#d8d8d8">预览</div>
<div class="t" style="left:1752px;top:342px;color:#bbb;font-size:11px">×</div>
<svg style="left:1886px;top:344px" width="16" height="10"><path d="M0 3 h5 l-2.5 3z" fill="#d0d0d0"/><path d="M6 1.5 h7 M6 4.5 h7 M6 7.5 h7" stroke="#d0d0d0" stroke-width="1.2"/></svg>
<svg style="left:0;top:0" width="1920" height="1080">
 <g fill="#d0d0d0">
 <rect x="1725" y="367" width="2" height="10"/><path d="M1736 367 v10 l-8 -5z"/>
 <path d="M1756 367 v10 l-8 -5z"/><rect x="1758" y="367" width="2" height="10"/>
 <path d="M1773 367 v10 l9 -5z"/>
 <rect x="1797" y="367" width="2" height="10"/><path d="M1801 367 v10 l8 -5z"/>
 <path d="M1821 367 v10 l8 -5z"/><rect x="1830" y="367" width="2" height="10"/>
 <path d="M1848 369 h3 l4 -3 v12 l-4 -3 h-3z"/>
 <path d="M1857 368 a5 5 0 0 1 0 8" fill="none" stroke="#d0d0d0" stroke-width="1.2"/>
 <path d="M1875 369 h2 v5 h10 v-3 h2 v5 h-14z M1878 369 h8 v-2 l4 3 l-4 3 v-2 h-8z"/>
 <rect x="1899" y="367" width="1.5" height="10"/><rect x="1902" y="367" width="1.5" height="10"/><rect x="1905" y="367" width="1.5" height="10"/><path d="M1907 367 v10 l8 -5z"/>
 </g>
</svg>
<!-- character -->
<div class="a" style="left:1713px;top:391px;width:206px;height:333px;background:#424242"></div>
<div class="a" style="left:1713px;top:391px;width:206px;height:19px;background:#131313"></div>
<div class="a" style="left:1713px;top:391px;width:88px;height:19px;background:linear-gradient(#333,#2a2a2a);border:1px solid #1e1e1e"></div>
<div class="a" style="left:1801px;top:391px;width:51px;height:19px;background:linear-gradient(#3e3e3e,#424242)"></div>
<div class="a" style="left:1852px;top:391px;width:55px;height:19px;background:linear-gradient(#333,#2a2a2a);border:1px solid #1e1e1e"></div>
<div class="a" style="left:1907px;top:391px;width:12px;height:19px;background:linear-gradient(#333,#2a2a2a);border:1px solid #1e1e1e"></div>
<div class="a" style="left:1805px;top:396px;width:3px;height:10px;background:repeating-linear-gradient(#6a6a6a 0 1px,transparent 1px 2px)"></div>
<div class="a" style="left:1911px;top:396px;width:3px;height:10px;background:repeating-linear-gradient(#6a6a6a 0 1px,transparent 1px 2px)"></div>
<div class="t" style="left:1724px;top:394px;color:#8a8a8a">效果和预设</div>
<div class="t" style="left:1812px;top:394px;color:#d8d8d8">字符</div>
<div class="t" style="left:1841px;top:394px;color:#bbb;font-size:11px">×</div>
<svg style="left:1886px;top:396px" width="16" height="10"><path d="M0 3 h5 l-2.5 3z" fill="#d0d0d0"/><path d="M6 1.5 h7 M6 4.5 h7 M6 7.5 h7" stroke="#d0d0d0" stroke-width="1.2"/></svg>
<!-- font dropdowns -->
<div class="a" style="left:1719px;top:420px;width:121px;height:17px;background:#262626;border:1px solid #1c1c1c"></div>
<div class="a" style="left:1720px;top:421px;width:101px;height:15px;background:#a0a0a0"></div>
<div class="a" style="left:1822px;top:421px;width:17px;height:15px;background:#3a3a3a"></div>
<svg style="left:1827px;top:426px" width="9" height="6"><path d="M0 0 h8 l-4 5z" fill="#a8a8a8"/></svg>
<div class="t" style="left:1723px;top:421px;color:#111">楷体</div>
<div class="a" style="left:1719px;top:444px;width:121px;height:17px;background:#262626;border:1px solid #1c1c1c"></div>
<div class="a" style="left:1720px;top:445px;width:101px;height:15px;background:#a0a0a0"></div>
<div class="a" style="left:1822px;top:445px;width:17px;height:15px;background:#3a3a3a"></div>
<svg style="left:1827px;top:450px" width="9" height="6"><path d="M0 0 h8 l-4 5z" fill="#a8a8a8"/></svg>
<div class="t" style="left:1727px;top:446px;color:#111">-</div>
<svg style="left:0;top:0" width="1920" height="1080">
 <path d="M1848 436 L1856 428" stroke="#c0c0c0" stroke-width="1.6"/><path d="M1854 426 l4 -4 l3 3 l-4 4z" fill="#c0c0c0"/>
 <rect x="1845.5" y="444.5" width="19" height="16" fill="#fff" stroke="#555"/><rect x="1846" y="445" width="18" height="7" fill="#000"/>
 <rect x="1884" y="433" width="29" height="29" fill="#fff" stroke="#333" stroke-width="0.5"/><rect x="1889" y="441" width="15" height="14" fill="#3a3a3a" stroke="#000"/>
 <rect x="1870" y="419" width="29" height="29" fill="#fff" stroke="#333" stroke-width="0.5"/>
 <rect x="1870.5" y="451.5" width="10" height="10" fill="#f0e8e8" stroke="#555"/><path d="M1872 460 L1879 453" stroke="#a01828" stroke-width="1.6"/>
 <path d="M1904 424 a5 5 0 0 1 7 4" stroke="#d0d0d0" stroke-width="1.3" fill="none"/><path d="M1903 421 v5 h4z M1912 431 h-5 l3 -4z" fill="#d0d0d0"/>
 <rect x="1719" y="467" width="193" height="1" fill="#2c2c2c"/>
 <rect x="1719" y="517" width="193" height="1" fill="#2c2c2c"/>
 <rect x="1719" y="548" width="193" height="1" fill="#2c2c2c"/>
 <rect x="1719" y="600" width="193" height="1" fill="#2c2c2c"/>
</svg>
<svg style="left:0;top:0" width="1920" height="1080">
 <g fill="#c8c8c8" font-family="Liberation Serif" font-weight="bold">
  <text x="1719" y="488" font-size="11" fill="#9a9a9a">T</text><text x="1724" y="488" font-size="17">T</text>
  <text x="1719" y="570" font-size="17">T</text>
  <text x="1825" y="571" font-size="17">T</text>
 </g>
 <g fill="#c8c8c8" font-family="Liberation Sans" font-size="9">
  <text x="1827" y="481">A</text><text x="1826" y="490">IA</text>
  <text x="1719" y="502" font-size="10">AIV</text>
  <rect x="1825" y="494" width="16" height="9" fill="#5a5a5a"/><text x="1826" y="502" fill="#e0e0e0" font-size="10">AV</text>
  <text x="1719" y="590" font-size="10">A</text><text x="1727" y="585" font-size="8">a</text>
  <text x="1829" y="589" font-size="10">あ</text>
 </g>
 <path d="M1826 506 h15 M1826 506 l3 -2 M1826 506 l3 2 M1841 506 l-3 -2 M1841 506 l-3 2" stroke="#d0d0d0" stroke-width="1"/>
 <path d="M1824 574 h17" stroke="#d0d0d0"/>
 <path d="M1721 556 v14 M1721 556 l-2 3 M1721 556 l2 3 M1721 570 l-2 -3 M1721 570 l2 -3" stroke="#d0d0d0"/>
 <path d="M1720 526 h14 M1720 530 h14" stroke="#c8c8c8" stroke-width="1.5"/><rect x="1720" y="533" width="14" height="3" fill="#c8c8c8"/>
 <g fill="#c8c8c8"><path d="M1798 478 h7 l-3.5 6z M1798 498 h7 l-3.5 6z M1798 529 h7 l-3.5 6z M1798 560 h7 l-3.5 6z M1798 581 h7 l-3.5 6z M1905 478 h7 l-3.5 6z M1905 498 h7 l-3.5 6z M1905 560 h7 l-3.5 6z M1905 581 h7 l-3.5 6z"/></g>
 <rect x="1808.5" y="524.5" width="104" height="16" fill="#393939" stroke="#1c1c1c"/>
 <rect x="1894" y="526" width="1" height="13" fill="#262626"/><path d="M1899 530 h8 l-4 5z" fill="#c8c8c8"/>
 <rect x="1763.5" y="607.5" width="24" height="18" fill="#2a2a2a" stroke="#161616"/>
 <rect x="1793.5" y="607.5" width="24" height="18" fill="#2a2a2a" stroke="#161616"/>
 <g fill="#d0d0d0" font-family="Liberation Serif" font-weight="bold" font-size="13">
  <text x="1745" y="622">T</text><text x="1769" y="622" font-style="italic">T</text><text x="1796" y="622">TT</text>
  <text x="1824" y="622">T</text><text x="1831" y="622" font-size="9">T</text>
  <text x="1854" y="622">T</text><text x="1862" y="615" font-size="7">1</text>
  <text x="1879" y="622">T</text><text x="1887" y="625" font-size="7">1</text>
 </g>
</svg>
<div class="t" style="left:1743px;top:474px;color:#d4a838;font-size:11px"><span style="border-bottom:1px dotted #a08030">57</span> <span style="color:#d0d0d0;font-size:12px">像素</span></div>
<div class="t" style="left:1847px;top:473px;color:#d4a838"><span style="border-bottom:1px dotted #a08030">自动</span></div>
<div class="t" style="left:1743px;top:493px;color:#6a6a6a"><span style="border-bottom:1px dotted #5a5a5a">度量标准</span></div>
<div class="t" style="left:1847px;top:494px;color:#d4a838;font-size:11px"><span style="border-bottom:1px dotted #a08030">-7</span></div>
<div class="t" style="left:1743px;top:525px;color:#d4a838;font-size:11px"><span style="border-bottom:1px dotted #a08030">1</span> <span style="color:#d0d0d0;font-size:12px">像素</span></div>
<div class="t" style="left:1814px;top:525px;color:#d8d8d8">在填充上描边</div>
<div class="t" style="left:1743px;top:556px;color:#d4a838;font-size:11px"><span style="border-bottom:1px dotted #a08030">100</span> <span style="color:#d0d0d0">%</span></div>
<div class="t" style="left:1848px;top:556px;color:#d4a838;font-size:11px"><span style="border-bottom:1px dotted #a08030">100</span> <span style="color:#d0d0d0">%</span></div>
<div class="t" style="left:1743px;top:577px;color:#d4a838;font-size:11px"><span style="border-bottom:1px dotted #a08030">0</span> <span style="color:#d0d0d0;font-size:12px">像素</span></div>
<div class="t" style="left:1848px;top:577px;color:#d4a838;font-size:11px"><span style="border-bottom:1px dotted #a08030">0</span> <span style="color:#d0d0d0">%</span></div>

<!-- ============ TIMELINE ============ -->
<div class="a" style="left:2px;top:729px;width:1707px;height:349px;background:#424242"></div>
<div class="a" style="left:2px;top:729px;width:1707px;height:19px;background:#131313"></div>
<div class="a" style="left:2px;top:729px;width:75px;height:19px;background:linear-gradient(#333,#2a2a2a);border:1px solid #1e1e1e"></div>
<div class="a" style="left:77px;top:729px;width:77px;height:19px;background:linear-gradient(#3e3e3e,#424242)"></div>
<div class="a" style="left:154px;top:729px;width:1542px;height:19px;background:linear-gradient(#333,#2a2a2a);border:1px solid #1e1e1e"></div>
<div class="a" style="left:1697px;top:729px;width:12px;height:19px;background:linear-gradient(#333,#2a2a2a);border:1px solid #1e1e1e"></div>
<div class="a" style="left:81px;top:734px;width:3px;height:10px;background:repeating-linear-gradient(#6a6a6a 0 1px,transparent 1px 2px)"></div>
<div class="a" style="left:1702px;top:734px;width:3px;height:10px;background:repeating-linear-gradient(#6a6a6a 0 1px,transparent 1px 2px)"></div>
<div class="t" style="left:12px;top:732px;color:#8a8a8a">渲染队列</div>
<div class="a" style="left:89px;top:733px;width:10px;height:10px;background:#b8a888"></div>
<div class="t" style="left:104px;top:732px;color:#d8d8d8">合成 <span style="font-size:11px;color:#bbb">1</span></div>
<div class="t" style="left:143px;top:732px;color:#bbb;font-size:11px">×</div>
<svg style="left:1675px;top:734px" width="16" height="10"><path d="M0 3 h5 l-2.5 3z" fill="#d0d0d0"/><path d="M6 1.5 h7 M6 4.5 h7 M6 7.5 h7" stroke="#d0d0d0" stroke-width="1.2"/></svg>
<!-- timecode -->
<div class="t" style="left:11px;top:752px;color:#e0b030;font-family:'Liberation Serif',serif;font-weight:bold;font-size:17px;line-height:18px;letter-spacing:0.6px">0:00:00:00</div>
<div class="a" style="left:12px;top:768px;width:84px;height:1px;border-top:1px dotted #c09030"></div>
<div class="t" style="left:14px;top:769px;color:#c8a040;font-size:10px;line-height:12px">00000 (25.00 fps)</div>
<div class="a" style="left:107px;top:758px;width:479px;height:17px;background:#a9a9a9;border:1px solid #1c1c1c"></div>
<svg style="left:111px;top:760px" width="24" height="14"><circle cx="7.5" cy="5.5" r="4" fill="none" stroke="#222" stroke-width="1.2"/><path d="M4.5 8.5 L1 12.5" stroke="#222" stroke-width="1.4"/><path d="M15 4 h6 l-3 4z" fill="#111"/></svg>
<svg style="left:0;top:0" width="1920" height="1080">
 <g fill="#c8c8c8">
  <rect x="598" y="760" width="4" height="3"/><rect x="598" y="765" width="4" height="3"/><rect x="598" y="770" width="4" height="3"/>
  <path d="M602 766.5 h6 l3 -3 h3 M608 766.5 l3 3 h3" stroke="#c8c8c8" fill="none"/>
  <rect x="614" y="760" width="5" height="3"/><rect x="614" y="765" width="5" height="3"/><rect x="614" y="770" width="5" height="3"/>
  <path d="M634 759 l3 3 M637 759 l-3 3 M635.5 758 v5 M633 760.5 h5" stroke="#d8d8d8"/>
  <path d="M643 764 l5 -3 l5 3 v6 l-5 3 l-5 -3z" fill="#c8c8c8"/><path d="M643 764 l5 3 l5 -3 M648 767 v6" stroke="#3e3e3e" fill="none"/>
  <path d="M668 773 h18 v-4 h-18z" fill="#a8a8a8"/><path d="M672 769 a5 5 0 0 1 10 0z" fill="#d8d8d8"/><rect x="676" y="766" width="2" height="4" fill="#444"/>
  <path d="M696 762 h16 v12 h-16z" fill="none" stroke="#b8b8b8" stroke-dasharray="1 1"/><rect x="699" y="764" width="2" height="9"/><rect x="703" y="764" width="2" height="9"/><rect x="707" y="764" width="2" height="9"/>
  <ellipse cx="728" cy="770" rx="6" ry="4" fill="#8a8a8a"/><ellipse cx="731" cy="766" rx="6" ry="4" fill="#b0b0b0"/><ellipse cx="734" cy="762" rx="5" ry="3.5" fill="#d0d0d0"/>
  <circle cx="765" cy="765" r="7" fill="#d0d0d0"/><circle cx="765" cy="764" r="2.5" fill="#555"/><path d="M756 773 l4 -2 l-1 3z" fill="#d0d0d0"/>
  <rect x="782.5" y="760.5" width="17" height="12" fill="none" stroke="#c8c8c8"/><path d="M783 764 q4 -4 8 2 q4 5 8 -2" stroke="#c8c8c8" fill="none" stroke-width="1.3"/>
 </g>
</svg>
<div class="a" style="left:2px;top:784px;width:813px;height:1px;background:#1e1e1e"></div>
<!-- column header -->
<div class="a" style="left:2px;top:785px;width:813px;height:18px;background:linear-gradient(#4a4a4a,#3e3e3e)"></div>
<svg style="left:0;top:0" width="1920" height="1080">
 <g fill="#d0d0d0">
  <path d="M8 794 q5.5 -6 11 0 q-5.5 6 -11 0z"/><circle cx="13.5" cy="794" r="2" fill="#3e3e3e"/>
  <path d="M21 791 h3 l5 -4 v14 l-5 -4 h-3z"/><path d="M31 790 a5 5 0 0 1 0 8 M33 788 a7 7 0 0 1 0 12" stroke="#d0d0d0" fill="none"/>
  <circle cx="43" cy="795" r="4"/>
  <rect x="54" y="793" width="9" height="7"/><path d="M56 793 v-2 a2.5 2.5 0 0 1 5 0 v2" stroke="#d0d0d0" fill="none" stroke-width="1.4"/>
  <path d="M85 797 l7 -7 h5 v5 l-7 7z"/>
  <rect x="70" y="789" width="1" height="11" fill="#2a2a2a"/><rect x="102" y="789" width="1" height="11" fill="#2a2a2a"/><rect x="135" y="789" width="1" height="11" fill="#2a2a2a"/><rect x="345" y="789" width="1" height="11" fill="#2a2a2a"/><rect x="510" y="789" width="1" height="11" fill="#2a2a2a"/><rect x="682" y="789" width="1" height="11" fill="#2a2a2a"/><rect x="798" y="789" width="1" height="11" fill="#2a2a2a"/>
  <path d="M516 794 h3 M525 794 h3 M522 790 v8" stroke="#c8c8c8"/><rect x="519" y="791" width="6" height="4" rx="2"/>
  <circle cx="537" cy="794" r="3" fill="none" stroke="#c8c8c8" stroke-width="1.3"/><path d="M537 788 v2 M537 798 v2 M531 794 h2 M541 794 h2" stroke="#c8c8c8"/>
  <path d="M548 789 l10 10" stroke="#c8c8c8" stroke-width="1.5" stroke-dasharray="2 1"/>
  <rect x="578" y="789" width="10" height="11" fill="none" stroke="#c8c8c8"/><rect x="581" y="789" width="1" height="11"/><rect x="584" y="789" width="1" height="11"/>
  <ellipse cx="593" cy="796" rx="4" ry="3" fill="#8a8a8a"/><ellipse cx="596" cy="793" rx="4" ry="3" fill="#c8c8c8"/>
  <circle cx="610" cy="794" r="5" fill="#c8c8c8"/><path d="M614 790 a5 5 0 0 1 -8 8z" fill="#222"/>
  <path d="M622 790 l5 -2 l5 2 v6 l-5 3 l-5 -3z"/><path d="M622 790 l5 2.5 l5 -2.5 M627 792.5 v6" stroke="#3e3e3e" fill="none"/>
 </g>
</svg>
<div class="t" style="left:565px;top:787px;color:#c8c8c8;font-family:'Liberation Serif',serif;font-style:italic;font-size:13px">fx</div>
<div class="t" style="left:108px;top:788px;color:#aaa;font-size:11px">#</div>
<div class="t" style="left:141px;top:788px;color:#d0d0d0">源名称</div>
<div class="t" style="left:351px;top:788px;color:#d0d0d0">模式</div>
<div class="t" style="left:427px;top:788px;color:#c8c8c8;font-size:11px">T</div>
<div class="t" style="left:443px;top:788px;color:#c8c8c8;font-size:11px">TrkMat</div>
<div class="t" style="left:687px;top:788px;color:#d0d0d0">父级</div>
<div class="a" style="left:2px;top:803px;width:813px;height:1px;background:#1e1e1e"></div>
<!-- layer row -->
<div class="a" style="left:2px;top:804px;width:813px;height:19px;background:#484848"></div>
<div class="a" style="left:2px;top:823px;width:813px;height:1px;background:#383838"></div>
<svg style="left:0;top:0" width="1920" height="1080">
 <path d="M8 813 q5.5 -6 11 0 q-5.5 6 -11 0z" fill="#d8d8d8"/><circle cx="13.5" cy="813" r="2" fill="#484848"/><rect x="7" y="820" width="13" height="1" fill="#aaa"/>
 <rect x="37" y="807" width="12" height="13" fill="#444" stroke="#3a3a3a"/><rect x="37" y="820" width="12" height="1" fill="#8a8a8a"/>
 <rect x="52" y="807" width="12" height="13" fill="#444" stroke="#3a3a3a"/><rect x="52" y="820" width="12" height="1" fill="#8a8a8a"/>
 <path d="M74 811 h9 l-4.5 6z" fill="#8a8a8a"/>
 <rect x="88" y="807" width="13" height="13" fill="#b8b4dc"/>
 <rect x="137" y="806" width="17" height="16" fill="#061024"/><rect x="137" y="807" width="12" height="5" fill="#31a8ff"/><path d="M150 806 l3 3 h-3z" fill="#31a8ff"/>
 <rect x="157" y="805.5" width="187" height="17" fill="#424242" stroke="#c8c8c8" stroke-width="2"/>
 <rect x="348.5" y="805.5" width="67" height="16" fill="#393939" stroke="#1c1c1c"/>
 <rect x="399" y="807" width="1" height="13" fill="#262626"/><path d="M404 810 h8 l-4 5z" fill="#c8c8c8"/>
 <rect x="422" y="806" width="14" height="14" fill="#444" stroke="#3a3a3a"/><rect x="422" y="820" width="14" height="1" fill="#8a8a8a"/>
 <rect x="515" y="806" width="13" height="14" fill="#3e3e3e"/><path d="M516 813 h3 M525 813 h3" stroke="#c8c8c8"/><rect x="519" y="810" width="6" height="4" rx="2" fill="#c8c8c8"/><rect x="521.5" y="812" width="1" height="5" fill="#c8c8c8"/><rect x="515" y="820" width="13" height="1" fill="#8a8a8a"/>
 <rect x="545" y="806" width="13" height="14" fill="#3e3e3e"/><path d="M546 819 l11 -12" stroke="#e0e0e0" stroke-width="1.5"/><rect x="545" y="820" width="13" height="1" fill="#8a8a8a"/>
 <rect x="590" y="806" width="13" height="14" fill="#444" stroke="#3a3a3a"/><rect x="605" y="806" width="13" height="14" fill="#444" stroke="#3a3a3a"/><rect x="620" y="806" width="13" height="14" fill="#444" stroke="#3a3a3a"/>
 <rect x="590" y="820" width="43" height="1" fill="#7a7a7a"/>
 <circle cx="692.5" cy="813" r="5" fill="none" stroke="#c0c0c0" stroke-width="1.3"/><circle cx="692.5" cy="813" r="2.2" fill="none" stroke="#c0c0c0" stroke-width="1.2"/>
 <rect x="705.5" y="805.5" width="88" height="16" fill="#393939" stroke="#1c1c1c"/>
 <rect x="775" y="807" width="1" height="13" fill="#262626"/><path d="M780 810 h8 l-4 5z" fill="#c8c8c8"/>
</svg>
<div class="t" style="left:108px;top:806px;color:#c8c8ff;font-weight:bold;font-size:12px;color:#b8b8e8">1</div>
<div class="t" style="left:142px;top:810px;color:#31a8ff;font-size:8px;line-height:10px">Ps</div>
<div class="t" style="left:159px;top:807px;color:#e8e8e8;font-weight:bold;font-size:12px">030.psd</div>
<div class="t" style="left:355px;top:806px;color:#d0d0d0">正常</div>
<div class="t" style="left:712px;top:806px;color:#d0d0d0">无</div>
<!-- sub row -->
<div class="a" style="left:2px;top:824px;width:813px;height:19px;background:#404040"></div>
<div class="a" style="left:147px;top:824px;width:199px;height:19px;background:#595959"></div>
<div class="a" style="left:2px;top:843px;width:813px;height:1px;background:#383838"></div>
<svg style="left:0;top:0" width="1920" height="1080">
 <circle cx="138" cy="834" r="4" fill="none" stroke="#d0d0d0" stroke-width="1.4"/><rect x="136" y="827" width="4" height="2" fill="#d0d0d0"/>
 <rect x="514" y="828" width="13" height="9" fill="none"/><path d="M517 830 h-2 v4 h2 M524 830 h2 v4 h-2 M518 832 h5" stroke="#d0d0d0" stroke-width="1.2" fill="none"/><rect x="514" y="838" width="13" height="1" fill="#9a9a9a"/>
</svg>
<div class="t" style="left:150px;top:826px;color:#d8d8d8">缩放</div>
<div class="t" style="left:534px;top:827px;color:#d4a838;font-size:11px"><span style="border-bottom:1px dotted #a08030">123.0</span>,<span style="border-bottom:1px dotted #a08030">123.0</span>%</div>
<!-- track area -->
<div class="a" style="left:815px;top:748px;width:877px;height:313px;background:#4f4f4f"></div><div class="a" style="left:815px;top:843px;width:8px;height:218px;background:#464646"></div><div class="a" style="left:1685px;top:843px;width:7px;height:218px;background:#464646"></div>
<div class="a" style="left:814px;top:748px;width:1px;height:313px;background:#262626"></div>
<div class="a" style="left:815px;top:748px;width:877px;height:36px;background:#3e3e3e"></div>
<div class="a" style="left:818px;top:754px;width:867px;height:10px;background:linear-gradient(#9a9a9a,#7e7e7e);border:1px solid #222"></div>
<div class="a" style="left:815px;top:753px;width:7px;height:11px;background:#d8a830;border-radius:5px 0 0 0;border:1px solid #222"></div>
<div class="a" style="left:1684px;top:753px;width:7px;height:11px;background:#d8a830;border-radius:0 5px 0 0;border:1px solid #222"></div>
<div class="a" style="left:815px;top:764px;width:877px;height:20px;background:#3e3e3e"></div>
<svg style="left:0;top:0" width="1920" height="1080">
 <g fill="#c8c8c8" font-family="Liberation Sans" font-size="10">
  <text x="986" y="775">01s</text><text x="1159" y="775">02s</text><text x="1331" y="775">03s</text><text x="1504" y="775">04s</text><text x="1676" y="775">05s</text>
  <text x="824" y="775">0s</text>
 </g>
 <g fill="#aaa"><rect x="994" y="779" width="1" height="5"/><rect x="1166" y="779" width="1" height="5"/><rect x="1338" y="779" width="1" height="5"/><rect x="1511" y="779" width="1" height="5"/><rect x="1684" y="779" width="1" height="5"/></g>
</svg>
<div class="a" style="left:815px;top:784px;width:877px;height:1px;background:#1e1e1e"></div>
<div class="a" style="left:815px;top:785px;width:870px;height:14px;background:#7a7a7a"></div>
<div class="a" style="left:815px;top:798px;width:870px;height:6px;background:#28b034;border-top:1px solid #1a1a1a;border-bottom:1px solid #1a1a1a"></div>
<div class="a" style="left:816px;top:784px;width:7px;height:15px;background:#d8a830;border:1px solid #222"></div>
<div class="a" style="left:1684px;top:784px;width:7px;height:15px;background:#d8a830;border:1px solid #222"></div>
<div class="a" style="left:815px;top:804px;width:877px;height:19px;background:#4a4a4a"></div>
<div class="a" style="left:823px;top:805px;width:862px;height:17px;background:linear-gradient(#b4b0d4,#9e9ac2 30%,#9894bc);border-bottom:1px solid #6a6888"></div>
<div class="a" style="left:815px;top:823px;width:877px;height:1px;background:#3a3a3a"></div>
<div class="a" style="left:815px;top:843px;width:877px;height:1px;background:#444"></div>
<div class="a" style="left:819px;top:826px;width:8px;height:14px;border:2px solid #d8a830;background:#5a4a20"></div>
<!-- playhead -->
<svg style="left:0;top:0" width="1920" height="1080">
 <path d="M816 766 h12 v7 l-6 6 l-6 -6z" fill="#e0b030" stroke="#222" stroke-width="0.5"/>
 <rect x="821" y="784" width="2" height="277" fill="#b03030"/>
</svg>
<!-- right scroll column -->
<div class="a" style="left:1692px;top:748px;width:17px;height:313px;background:#3a3a3a"></div>
<svg style="left:0;top:0" width="1920" height="1080">
 <path d="M1694 786 h12 v9 l-6 5 l-6 -5z" fill="#7a7a7a" stroke="#bbb"/>
 <circle cx="1698" cy="811" r="4" fill="none" stroke="#bbb"/><rect x="1700" y="810" width="6" height="6" fill="#3a3a3a" stroke="#bbb"/><path d="M1694 820 l3 -5 l3 5z" fill="#bbb"/>
 <rect x="1693" y="825" width="15" height="236" fill="#353535" stroke="#2c2c2c"/>
 <path d="M1696 833 l4.5 -6 l4.5 6z" fill="#555"/>
 <path d="M1696 1048 l4.5 6 l4.5 -6z" fill="#555"/>
</svg>
<!-- bottom bar -->
<div class="a" style="left:2px;top:1061px;width:1707px;height:1px;background:#262626"></div>
<div class="a" style="left:2px;top:1062px;width:1707px;height:16px;background:#3e3e3e"></div>
<svg style="left:0;top:0" width="1920" height="1080">
 <rect x="5.5" y="1064.5" width="10" height="9" fill="none" stroke="#c8c8c8"/><rect x="8.5" y="1067.5" width="10" height="9" fill="#333" stroke="#c8c8c8"/>
 <rect x="26.5" y="1066.5" width="10" height="9" fill="#333" stroke="#c8c8c8"/><circle cx="29" cy="1068" r="4" fill="none" stroke="#c8c8c8"/>
 <path d="M46 1065 l-2 4 l2 4 M50 1065 l2 4 l-2 4" stroke="#c8c8c8" fill="none" stroke-width="1.5"/>
 <path d="M821 1072 l4 -4 l4 4z" fill="#d0d0d0"/>
 <rect x="845" y="1068" width="44" height="5" fill="#222"/>
 <path d="M842 1074 v-5 l3.5 -3 l3.5 3 v5z" fill="#555" stroke="#222"/>
 <path d="M901 1073 l6 -6 l3 3 l3 -3 l6 6z" fill="#c8c8c8"/>
 <rect x="923" y="1061" width="769" height="17" fill="#343434"/>
 <path d="M934 1065 l-6 4.5 l6 4.5z" fill="#555"/>
 <path d="M1677 1065 l6 4.5 l-6 4.5z" fill="#888"/>
</svg>
<div class="a" style="left:0;top:1078px;width:1920px;height:2px;background:#2a2a2a"></div>
<!-- ============ PARAGRAPH ============ -->
<div class="a" style="left:1713px;top:729px;width:206px;height:349px;background:#424242"></div>
<div class="a" style="left:1713px;top:729px;width:206px;height:19px;background:#131313"></div>
<div class="a" style="left:1713px;top:729px;width:51px;height:19px;background:linear-gradient(#333,#2a2a2a);border:1px solid #1e1e1e"></div>
<div class="a" style="left:1765px;top:729px;width:52px;height:19px;background:linear-gradient(#3e3e3e,#424242)"></div>
<div class="a" style="left:1817px;top:729px;width:90px;height:19px;background:linear-gradient(#333,#2a2a2a);border:1px solid #1e1e1e"></div>
<div class="a" style="left:1907px;top:729px;width:12px;height:19px;background:linear-gradient(#333,#2a2a2a);border:1px solid #1e1e1e"></div>
<div class="a" style="left:1769px;top:734px;width:3px;height:10px;background:repeating-linear-gradient(#6a6a6a 0 1px,transparent 1px 2px)"></div>
<div class="a" style="left:1911px;top:734px;width:3px;height:10px;background:repeating-linear-gradient(#6a6a6a 0 1px,transparent 1px 2px)"></div>
<div class="t" style="left:1724px;top:732px;color:#8a8a8a">对齐</div>
<div class="t" style="left:1776px;top:732px;color:#d8d8d8">段落</div>
<div class="t" style="left:1805px;top:732px;color:#bbb;font-size:11px">×</div>
<svg style="left:1886px;top:734px" width="16" height="10"><path d="M0 3 h5 l-2.5 3z" fill="#d0d0d0"/><path d="M6 1.5 h7 M6 4.5 h7 M6 7.5 h7" stroke="#d0d0d0" stroke-width="1.2"/></svg>
<svg style="left:0;top:0" width="1920" height="1080">
 <rect x="1720.5" y="754.5" width="20" height="21" fill="#262626" stroke="#141414"/>
 <g stroke="#d0d0d0" stroke-width="1.2" fill="none">
  <path d="M1724 758.5 h13 M1724 761.5 h9 M1724 764.5 h13 M1724 767.5 h9 M1724 770.5 h13"/>
  <path d="M1748 758.5 h14 M1750 761.5 h10 M1748 764.5 h14 M1750 767.5 h10 M1748 770.5 h14"/>
  <path d="M1773 758.5 h14 M1777 761.5 h10 M1773 764.5 h14 M1777 767.5 h10 M1773 770.5 h14"/>
  <path d="M1803 758.5 h14 M1803 761.5 h14 M1803 764.5 h14 M1803 767.5 h14 M1803 770.5 h10"/>
  <path d="M1828 758.5 h14 M1828 761.5 h14 M1828 764.5 h14 M1828 767.5 h14 M1830 770.5 h10"/>
  <path d="M1853 758.5 h14 M1853 761.5 h14 M1853 764.5 h14 M1853 767.5 h14 M1857 770.5 h10"/>
  <path d="M1883 758.5 h14 M1883 761.5 h14 M1883 764.5 h14 M1883 767.5 h14 M1883 770.5 h14"/>
 </g>
 <rect x="1719" y="780" width="193" height="1" fill="#2c2c2c"/>
 <g stroke="#d0d0d0" stroke-width="1" fill="none">
  <path d="M1720 791.5 h5 M1726.5 787 v9 M1729 787.5 h8 M1729 789.5 h6 M1729 791.5 h8 M1729 793.5 h6 M1729 795.5 h8"/>
  <path d="M1790 787.5 h5 M1795.5 787 v2 M1797 789.5 h10 M1799 791.5 h8 M1797 793.5 h10 M1797 795.5 h10 M1797 797.5 h10"/>
  <path d="M1857 787.5 h5 M1862.5 787 v2 M1864 789.5 h10 M1866 791.5 h8 M1864 793.5 h10 M1866 795.5 h8"/>
  <path d="M1720 805.5 h8 M1720 807.5 h6 M1720 809.5 h8 M1720 811.5 h6 M1720 813.5 h8 M1730.5 805 v9 M1732 809.5 h5"/>
  <path d="M1797 802.5 h10 M1797 804.5 h8 M1797 806.5 h10 M1797 808.5 h10 M1797 810.5 h10 M1790 813.5 h5 M1795.5 811 v2"/>
 </g>
</svg>
<div class="t" style="left:1741px;top:784px;color:#d4a838;font-size:11px"><span style="border-bottom:1px dotted #a08030">71</span> <span style="color:#d0d0d0;font-size:12px">像素</span></div>
<div class="t" style="left:1814px;top:784px;color:#d4a838;font-size:11px"><span style="border-bottom:1px dotted #a08030">-87</span> <span style="color:#d0d0d0;font-size:12px">像素</span></div>
<div class="t" style="left:1879px;top:784px;color:#d4a838;font-size:11px"><span style="border-bottom:1px dotted #a08030">13</span> <span style="color:#d0d0d0;font-size:12px">像素</span></div>
<div class="t" style="left:1742px;top:802px;color:#d4a838;font-size:11px"><span style="border-bottom:1px dotted #a08030">122</span> <span style="color:#d0d0d0;font-size:12px">像素</span></div>
<div class="t" style="left:1813px;top:803px;color:#d4a838;font-size:11px"><span style="border-bottom:1px dotted #a08030">46</span> <span style="color:#d0d0d0;font-size:12px">像素</span></div>
</body></html>
